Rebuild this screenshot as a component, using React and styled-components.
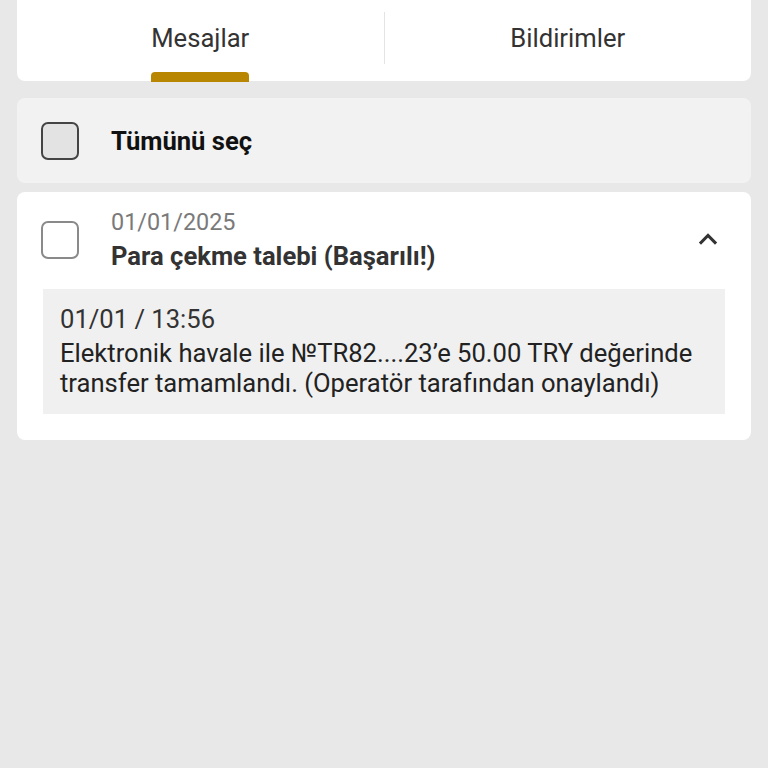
import React from "react";
import styled, { createGlobalStyle } from "styled-components";

const Global = createGlobalStyle`
  html, body { margin: 0; padding: 0; background: #e8e8e8; }
  body { font-family: Roboto, "Noto Sans", sans-serif; }
  * { box-sizing: border-box; }
`;

const Page = styled.div`
  min-height: 768px;
  background: #e8e8e8;
  padding: 0 17px;
  display: flex;
  flex-direction: column;
  gap: 9px;
`;

const TabsCard = styled.div`
  background: #fff;
  border-radius: 0 0 8px 8px;
  height: 81px;
  display: flex;
  position: relative;
  margin-bottom: 8px;
`;

const Tab = styled.div`
  flex: 1;
  display: flex;
  justify-content: center;
  padding-top: 23px;
  font-size: 25.6px;
  color: #333;
  position: relative;
`;

const TabLabel = styled.span`
  position: relative;
  display: inline-block;
  height: 30px;
  line-height: 30px;
`;

const Indicator = styled.div`
  position: absolute;
  left: 0;
  right: 0;
  top: 49px;
  height: 10px;
  background: #b88600;
  border-radius: 4px 4px 0 0;
`;

const Divider = styled.div`
  width: 1px;
  background: #e4e4e4;
  margin: 12px 0 17px;
`;

const SelectAll = styled.div`
  background: #f2f2f2;
  border-radius: 8px;
  height: 85px;
  display: flex;
  align-items: center;
  padding-left: 24px;
  gap: 32px;
`;

const Box = styled.div`
  width: 38px;
  height: 38px;
  border-radius: 7px;
  border: 2px solid ${(p) => (p.$dark ? "#444" : "#8a8a8a")};
  background: ${(p) => (p.$dark ? "#e3e3e3" : "#fff")};
  flex: none;
`;

const SelectLabel = styled.span`
  font-size: 25.6px;
  font-weight: 700;
  color: #111;
`;

const MessageCard = styled.div`
  background: #fff;
  border-radius: 8px;
  padding: 15px 26px 26px 26px;
`;

const Header = styled.div`
  display: flex;
  align-items: center;
`;

const HeaderBox = styled(Box)`
  margin-left: -2px;
  margin-right: 32px;
  margin-top: -3px;
`;

const HeaderText = styled.div`
  flex: 1;
  display: flex;
  flex-direction: column;
`;

const DateText = styled.div`
  font-size: 23.4px;
  color: #7a7a7a;
  line-height: 30px;
`;

const Title = styled.div`
  font-size: 25.6px;
  font-weight: 700;
  color: #333;
  line-height: 38px;
`;

const Chevron = styled.svg`
  width: 28px;
  height: 28px;
  margin-right: 3px;
  margin-top: -4px;
`;

const Body = styled.div`
  margin-top: 14px;
  background: #f0f0f0;
  padding: 15px 17px 16px 17px;
  font-size: 25.6px;
  color: #222;
  line-height: 30px;
`;

const BodyTime = styled.div`
  color: #333;
  margin-bottom: 4px;
`;

export default function App() {
  return (
    <>
      <Global />
      <Page>
        <TabsCard>
          <Tab>
            <TabLabel>
              Mesajlar
              <Indicator />
            </TabLabel>
          </Tab>
          <Divider />
          <Tab>
            <TabLabel>Bildirimler</TabLabel>
          </Tab>
        </TabsCard>
        <SelectAll>
          <Box $dark />
          <SelectLabel>Tümünü seç</SelectLabel>
        </SelectAll>
        <MessageCard>
          <Header>
            <HeaderBox />
            <HeaderText>
              <DateText>01/01/2025</DateText>
              <Title>Para çekme talebi (Başarılı!)</Title>
            </HeaderText>
            <Chevron viewBox="0 0 24 24" fill="none" stroke="#333" strokeWidth="2.6" strokeLinecap="square">
              <path d="M6 15l6-6 6 6" />
            </Chevron>
          </Header>
          <Body>
            <BodyTime>01/01 / 13:56</BodyTime>
            Elektronik havale ile №TR82....23’e 50.00 TRY değerinde transfer tamamlandı. (Operatör tarafından onaylandı)
          </Body>
        </MessageCard>
      </Page>
    </>
  );
}
